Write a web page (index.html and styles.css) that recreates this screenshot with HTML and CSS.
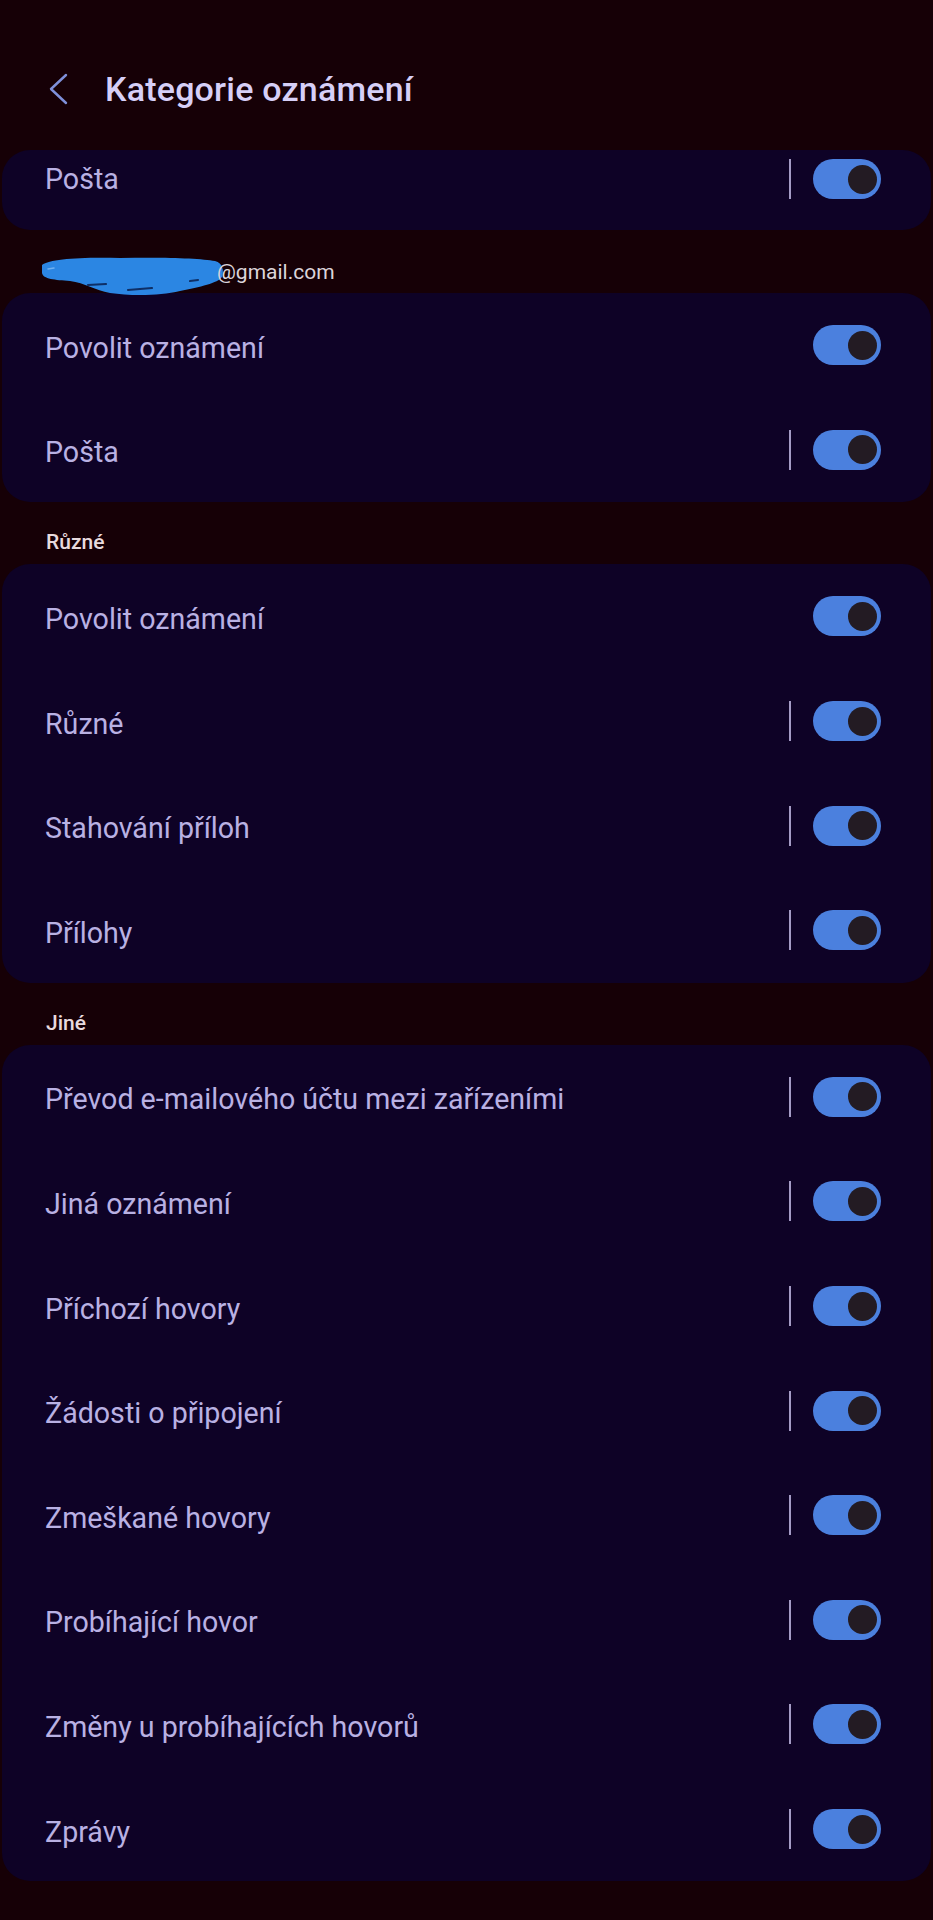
FILE: index.html
```html
<!DOCTYPE html>
<html lang="cs">
<head>
<meta charset="utf-8">
<title>Kategorie oznámení</title>
<link rel="stylesheet" href="styles.css">
</head>
<body>
<header class="topbar">
  <svg class="back" width="22" height="32" viewBox="0 0 22 32"><path d="M19 2 L4 16 L19 30" fill="none" stroke="#7f90da" stroke-width="2.4" stroke-linecap="round" stroke-linejoin="round"/></svg>
  <h1 class="title">Kategorie oznámení</h1>
</header>

<section class="card card-clipped">
  <div class="row row-top"><span class="label">Pošta</span><span class="divider"></span><span class="toggle"><span class="knob"></span></span></div>
</section>

<div class="section-label email">
  <svg class="scribble" width="184" height="42" viewBox="0 0 184 42"><path d="M2 10 C10 4 40 2 80 3 C120 2 160 3 175 6 C183 8 184 16 182 22 C178 28 160 32 140 36 C120 41 90 41 70 38 C55 35 45 28 30 26 C15 25 3 24 2 18 Z" fill="#2b86e3"/><path d="M48 30 L66 29 M88 35 L112 33 M150 26 L158 25" stroke="#0e2f66" stroke-width="2.2" stroke-linecap="round"/><path d="M8 14 L14 13" stroke="#6fb0f0" stroke-width="1.5" stroke-linecap="round"/></svg><span class="email-text">@gmail.com</span>
</div>
<section class="card">
  <div class="row"><span class="label">Povolit oznámení</span><span class="toggle"><span class="knob"></span></span></div>
  <div class="row"><span class="label">Pošta</span><span class="divider"></span><span class="toggle"><span class="knob"></span></span></div>
</section>

<div class="section-label">Různé</div>
<section class="card">
  <div class="row"><span class="label">Povolit oznámení</span><span class="toggle"><span class="knob"></span></span></div>
  <div class="row"><span class="label">Různé</span><span class="divider"></span><span class="toggle"><span class="knob"></span></span></div>
  <div class="row"><span class="label">Stahování příloh</span><span class="divider"></span><span class="toggle"><span class="knob"></span></span></div>
  <div class="row"><span class="label">Přílohy</span><span class="divider"></span><span class="toggle"><span class="knob"></span></span></div>
</section>

<div class="section-label">Jiné</div>
<section class="card">
  <div class="row"><span class="label">Převod e-mailového účtu mezi zařízeními</span><span class="divider"></span><span class="toggle"><span class="knob"></span></span></div>
  <div class="row"><span class="label">Jiná oznámení</span><span class="divider"></span><span class="toggle"><span class="knob"></span></span></div>
  <div class="row"><span class="label">Příchozí hovory</span><span class="divider"></span><span class="toggle"><span class="knob"></span></span></div>
  <div class="row"><span class="label">Žádosti o připojení</span><span class="divider"></span><span class="toggle"><span class="knob"></span></span></div>
  <div class="row"><span class="label">Zmeškané hovory</span><span class="divider"></span><span class="toggle"><span class="knob"></span></span></div>
  <div class="row"><span class="label">Probíhající hovor</span><span class="divider"></span><span class="toggle"><span class="knob"></span></span></div>
  <div class="row"><span class="label">Změny u probíhajících hovorů</span><span class="divider"></span><span class="toggle"><span class="knob"></span></span></div>
  <div class="row"><span class="label">Zprávy</span><span class="divider"></span><span class="toggle"><span class="knob"></span></span></div>
</section>
</body>
</html>
```
FILE: styles.css
```css
html, body {
  margin: 0;
  padding: 0;
}
body {
  background: #160006;
  font-family: Roboto, "Noto Sans", "Liberation Sans", sans-serif;
  color: #b9b1e3;
  width: 933px;
  min-height: 1920px;
}
.topbar {
  display: flex;
  align-items: center;
  height: 38px;
  padding: 70px 0 0 47px;
  margin-bottom: 42px;
}
.back {
  display: block;
  flex: none;
}
.title {
  margin: 0 0 0 36px;
  font-size: 34px;
  line-height: 38px;
  font-weight: 500;
  color: #d6cff7;
  letter-spacing: 0.2px;
}
.card {
  background: #0e0226;
  border-radius: 28px;
  margin: 0 2px;
}
.card-clipped {
  height: 80px;
  overflow: hidden;
}
.row {
  display: flex;
  align-items: center;
  height: 104.6px;
  padding: 0 50px 0 43px;
  box-sizing: border-box;
}
.row-top {
  height: 80px;
  padding-bottom: 22px;
}
.row-top .label {
  padding-top: 0;
}
.label {
  flex: 1;
  font-size: 28.6px;
  line-height: 34px;
  padding-top: 5px;
  color: #b9b1e3;
  white-space: nowrap;
}
.divider {
  flex: none;
  width: 2px;
  height: 40px;
  background: #a59cc6;
  margin-right: 22px;
}
.toggle {
  flex: none;
  position: relative;
  width: 68px;
  height: 40px;
  border-radius: 20px;
  background: #4b80de;
}
.knob {
  position: absolute;
  right: 4px;
  top: 5.5px;
  width: 29px;
  height: 29px;
  border-radius: 50%;
  background: #231b23;
}
.section-label {
  height: 62px;
  box-sizing: border-box;
  padding: 28px 0 0 46px;
  font-size: 21px;
  line-height: 24px;
  font-weight: 500;
  color: #e8dade;
}
.section-label.email {
  display: flex;
  align-items: flex-start;
  height: 63px;
  padding: 25px 0 0 40px;
}
.scribble {
  display: block;
  flex: none;
  margin-right: -7px;
}
.email-text {
  font-weight: 400;
  font-size: 21px;
  line-height: 24px;
  margin-top: 5px;
  color: #dcd4da;
}
```
